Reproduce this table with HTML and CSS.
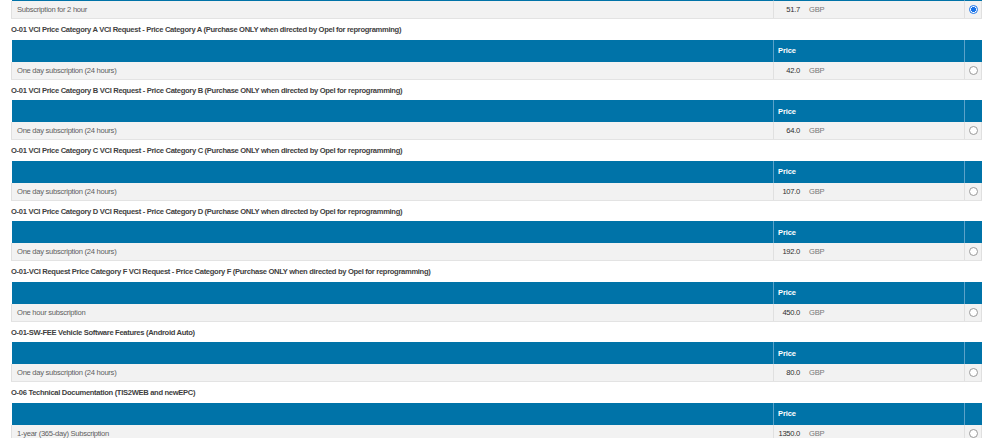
FILE: index.html
```html
<!DOCTYPE html>
<html>
<head>
<meta charset="utf-8">
<link rel="stylesheet" href="styles.css">
</head>
<body>
<div class="page">
  <section class="group">
    <table class="prices">
      <colgroup><col class="c-desc"><col class="c-price"><col class="c-pick"></colgroup>
      <tr class="head"><th class="desc"></th><th class="price"></th><th class="pick"></th></tr>
      <tr class="row"><td class="desc">Subscription for 2 hour</td><td class="price"><span class="amt">51.7</span><span class="cur">GBP</span></td><td class="pick"><input type="radio" name="sub" checked></td></tr>
    </table>
  </section>
  <section class="group">
    <h3 class="title">O-01 VCI Price Category A VCI Request - Price Category A (Purchase ONLY when directed by Opel for reprogramming)</h3>
    <table class="prices">
      <colgroup><col class="c-desc"><col class="c-price"><col class="c-pick"></colgroup>
      <tr class="head"><th class="desc"></th><th class="price">Price</th><th class="pick"></th></tr>
      <tr class="row"><td class="desc">One day subscription (24 hours)</td><td class="price"><span class="amt">42.0</span><span class="cur">GBP</span></td><td class="pick"><input type="radio" name="sub"></td></tr>
    </table>
  </section>
  <section class="group">
    <h3 class="title">O-01 VCI Price Category B VCI Request - Price Category B (Purchase ONLY when directed by Opel for reprogramming)</h3>
    <table class="prices">
      <colgroup><col class="c-desc"><col class="c-price"><col class="c-pick"></colgroup>
      <tr class="head"><th class="desc"></th><th class="price">Price</th><th class="pick"></th></tr>
      <tr class="row"><td class="desc">One day subscription (24 hours)</td><td class="price"><span class="amt">64.0</span><span class="cur">GBP</span></td><td class="pick"><input type="radio" name="sub"></td></tr>
    </table>
  </section>
  <section class="group">
    <h3 class="title">O-01 VCI Price Category C VCI Request - Price Category C (Purchase ONLY when directed by Opel for reprogramming)</h3>
    <table class="prices">
      <colgroup><col class="c-desc"><col class="c-price"><col class="c-pick"></colgroup>
      <tr class="head"><th class="desc"></th><th class="price">Price</th><th class="pick"></th></tr>
      <tr class="row"><td class="desc">One day subscription (24 hours)</td><td class="price"><span class="amt">107.0</span><span class="cur">GBP</span></td><td class="pick"><input type="radio" name="sub"></td></tr>
    </table>
  </section>
  <section class="group">
    <h3 class="title">O-01 VCI Price Category D VCI Request - Price Category D (Purchase ONLY when directed by Opel for reprogramming)</h3>
    <table class="prices">
      <colgroup><col class="c-desc"><col class="c-price"><col class="c-pick"></colgroup>
      <tr class="head"><th class="desc"></th><th class="price">Price</th><th class="pick"></th></tr>
      <tr class="row"><td class="desc">One day subscription (24 hours)</td><td class="price"><span class="amt">192.0</span><span class="cur">GBP</span></td><td class="pick"><input type="radio" name="sub"></td></tr>
    </table>
  </section>
  <section class="group">
    <h3 class="title">O-01-VCI Request Price Category F VCI Request - Price Category F (Purchase ONLY when directed by Opel for reprogramming)</h3>
    <table class="prices">
      <colgroup><col class="c-desc"><col class="c-price"><col class="c-pick"></colgroup>
      <tr class="head"><th class="desc"></th><th class="price">Price</th><th class="pick"></th></tr>
      <tr class="row"><td class="desc">One hour subscription</td><td class="price"><span class="amt">450.0</span><span class="cur">GBP</span></td><td class="pick"><input type="radio" name="sub"></td></tr>
    </table>
  </section>
  <section class="group">
    <h3 class="title">O-01-SW-FEE Vehicle Software Features (Android Auto)</h3>
    <table class="prices">
      <colgroup><col class="c-desc"><col class="c-price"><col class="c-pick"></colgroup>
      <tr class="head"><th class="desc"></th><th class="price">Price</th><th class="pick"></th></tr>
      <tr class="row"><td class="desc">One day subscription (24 hours)</td><td class="price"><span class="amt">80.0</span><span class="cur">GBP</span></td><td class="pick"><input type="radio" name="sub"></td></tr>
    </table>
  </section>
  <section class="group">
    <h3 class="title">O-06 Technical Documentation (TIS2WEB and newEPC)</h3>
    <table class="prices">
      <colgroup><col class="c-desc"><col class="c-price"><col class="c-pick"></colgroup>
      <tr class="head"><th class="desc"></th><th class="price">Price</th><th class="pick"></th></tr>
      <tr class="row"><td class="desc">1-year (365-day) Subscription</td><td class="price"><span class="amt">1350.0</span><span class="cur">GBP</span></td><td class="pick"><input type="radio" name="sub"></td></tr>
    </table>
  </section>
</div>
</body>
</html>
```
FILE: styles.css
```css
html, body {
  margin: 0;
  padding: 0;
  background: #ffffff;
  overflow: hidden;
}
body {
  font-family: "Liberation Sans", Arial, sans-serif;
  color: #444;
}
.page {
  margin-top: -21px;
  padding: 0 19px 0 11px;
}
.group {
  margin: 0;
}
.title {
  margin: 0;
  padding-top: 1px;
  height: 19.5px;
  line-height: 19.5px;
  font-size: 7.6px;
  letter-spacing: -0.32px;
  font-weight: bold;
  color: #3f3f3f;
  white-space: nowrap;
}
.prices {
  width: 970px;
  border-collapse: collapse;
  table-layout: fixed;
}
.c-desc { width: 762px; }
.c-price { width: 191px; }
.c-pick { width: 17px; }
.prices th, .prices td {
  padding: 0;
}
.head th {
  background: #0073a8;
  height: 22px;
  color: #fff;
  font-size: 7.5px;
  letter-spacing: -0.1px;
  font-weight: bold;
  text-align: left;
  border-left: 1px solid #5aa2c9;
}
.head th.desc {
  border-left: none;
}
.head th.price {
  padding-left: 4px;
}
.row td {
  background: #f2f2f2;
  height: 17px;
  font-size: 7.6px;
  letter-spacing: -0.28px;
  color: #5f5f5f;
  border-left: 1px solid #e0e0e0;
  border-bottom: 1px solid #e3e3e3;
}
.row td:last-child {
  border-right: 1px solid #e0e0e0;
}
.row td.desc {
  padding-left: 5px;
}
td.price {
  white-space: nowrap;
}
.amt {
  display: inline-block;
  width: 26px;
  text-align: right;
  color: #2f2f2f;
}
.cur {
  margin-left: 9px;
  color: #777;
}
td.pick {
  text-align: center;
}
td.pick input {
  appearance: none;
  -webkit-appearance: none;
  width: 9px;
  height: 9px;
  margin: 0;
  border: 1px solid #999;
  border-radius: 50%;
  background: #fff;
  vertical-align: middle;
  box-sizing: border-box;
}
td.pick input:checked {
  border-color: #1a73e8;
  background: radial-gradient(circle, #1a73e8 0 2.3px, #fff 2.6px);
}
```
